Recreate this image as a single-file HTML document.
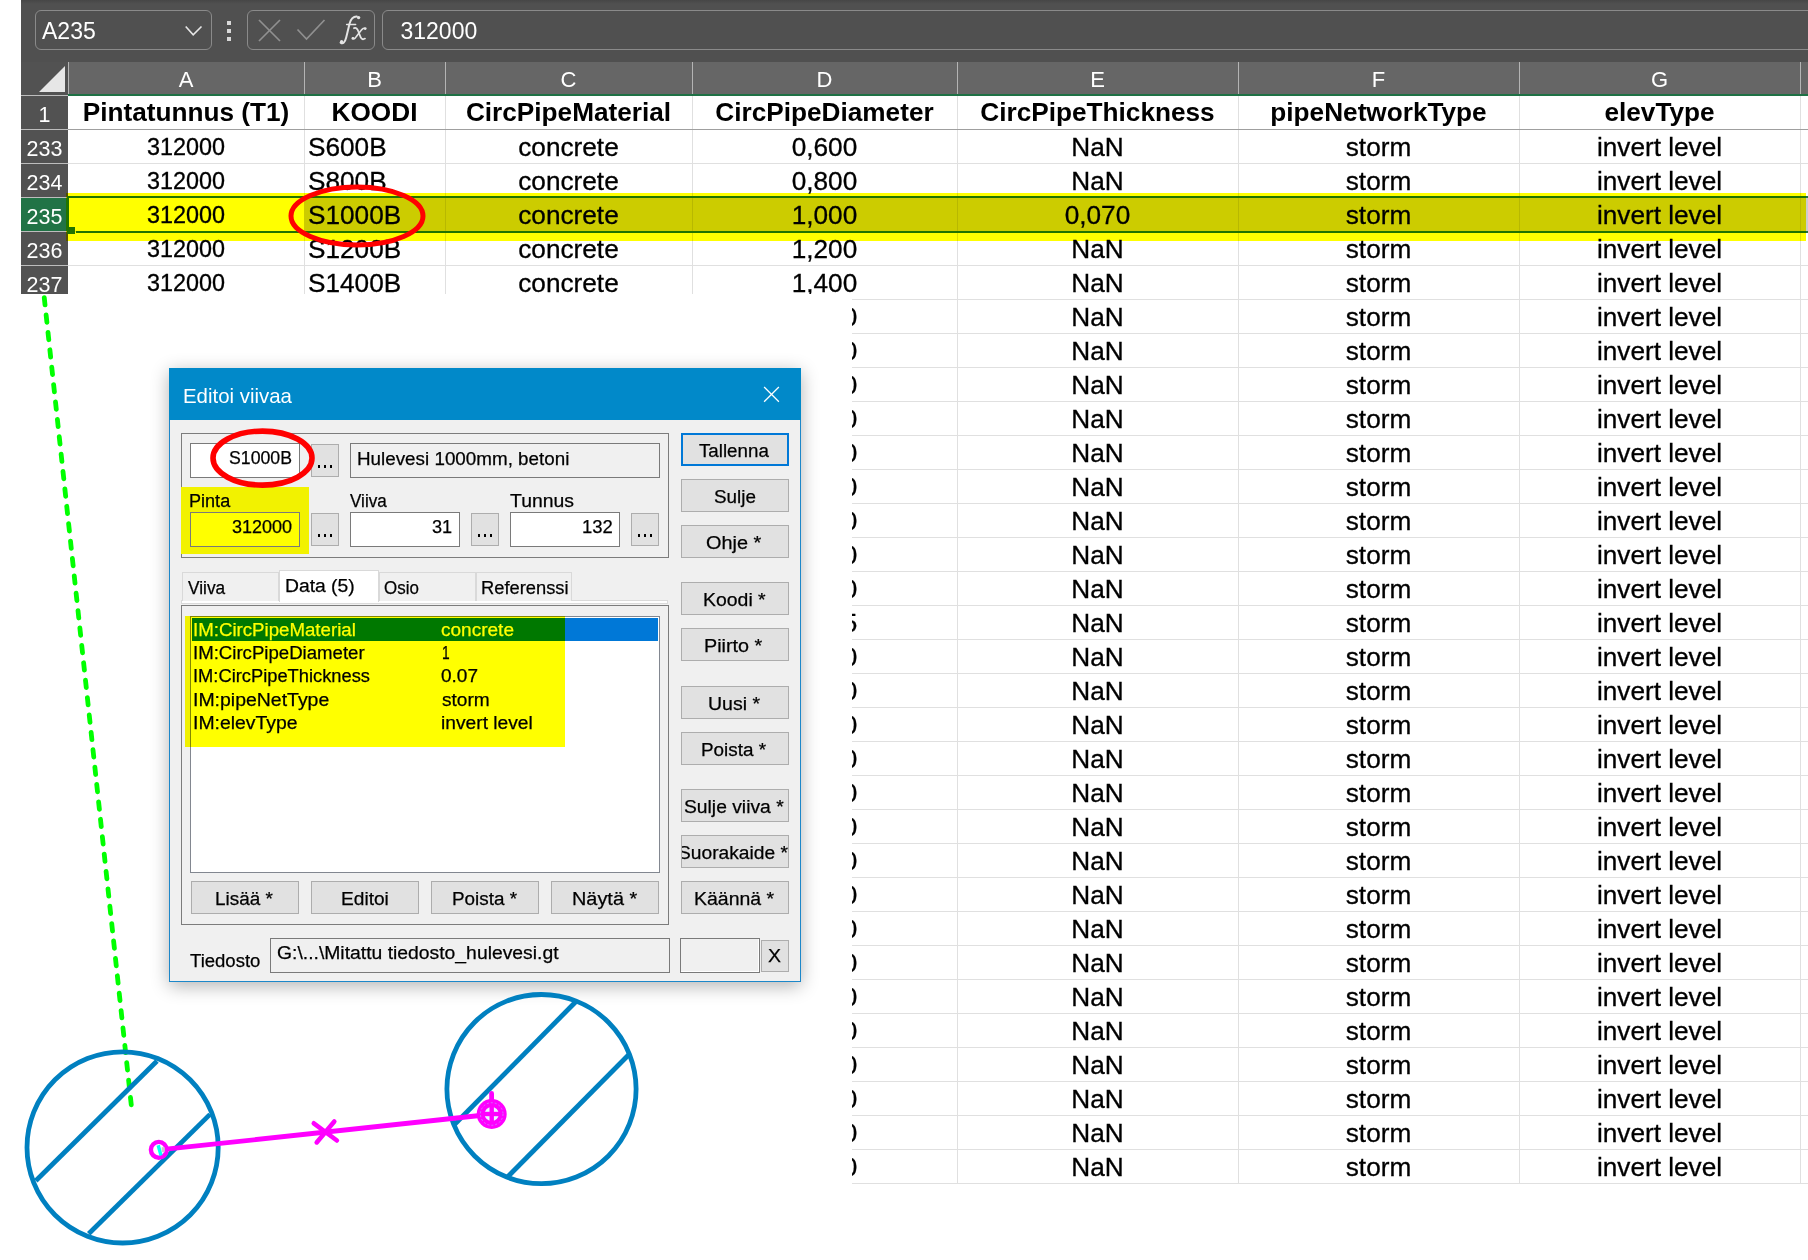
<!DOCTYPE html>
<html><head><meta charset="utf-8">
<style>
html,body{margin:0;padding:0;}
body{width:1808px;height:1260px;position:relative;overflow:hidden;background:#fff;font-family:"Liberation Sans", sans-serif;}
.a{position:absolute;}
.t{position:absolute;white-space:nowrap;line-height:1;}
.c{position:absolute;white-space:nowrap;line-height:1;text-align:center;}
.k{-webkit-text-stroke:0.3px #000;}
</style></head><body>

<div class="a" style="left:21px;top:0;width:1787px;height:62px;background:#505050"></div>
<div class="a" style="left:21px;top:0;width:1787px;height:4px;background:linear-gradient(#464646,#505050)"></div>
<div class="a" style="left:35px;top:10px;width:177px;height:40px;border:1px solid #8a8a8a;border-radius:6px;box-sizing:border-box"></div>
<div class="t" style="left:42px;top:19.5px;font-size:23px;color:#fff">A235</div>
<svg class="a" style="left:181px;top:22px" width="24" height="16"><polyline points="4.7,4.5 12.2,12.8 20.5,4.5" fill="none" stroke="#e6e6e6" stroke-width="1.6"/></svg>
<div class="a" style="left:227px;top:21px;width:4px;height:4px;background:#d8d8d8"></div>
<div class="a" style="left:227px;top:29px;width:4px;height:4px;background:#d8d8d8"></div>
<div class="a" style="left:227px;top:37px;width:4px;height:4px;background:#d8d8d8"></div>
<div class="a" style="left:247px;top:10px;width:128px;height:40px;border:1px solid #8a8a8a;border-radius:6px;box-sizing:border-box"></div>
<svg class="a" style="left:256px;top:17px" width="26" height="26"><line x1="3" y1="3" x2="24" y2="24" stroke="#909090" stroke-width="1.7"/><line x1="24" y1="3" x2="3" y2="24" stroke="#909090" stroke-width="1.7"/></svg>
<svg class="a" style="left:296px;top:17px" width="32" height="26"><polyline points="1.5,12.5 10.5,22 28.5,3" fill="none" stroke="#909090" stroke-width="1.7"/></svg>
<svg class="a" style="left:330px;top:10px" width="45" height="40" viewBox="330 10 45 40"><g fill="none" stroke="#e4e4e4" stroke-linecap="round"><path d="M340.6 42.6 Q344.2 45.2 346.2 37.5 L349.6 23.5 Q351.6 16.2 356.8 16.4" stroke-width="2"/><path d="M346.6 24.6 L355.6 24.6" stroke-width="1.5"/><path d="M354 28.2 Q357 27 358.4 31.5 L360.6 37.2 Q362 40.4 365 38.6" stroke-width="1.8"/><path d="M365.2 28.6 Q363.4 27.2 360.8 30.8 L356.4 36.4 Q354.6 39.6 353 38.2" stroke-width="1.6"/></g><g fill="#e4e4e4"><circle cx="358.6" cy="17.6" r="1.7"/><circle cx="341.6" cy="41.6" r="1.6"/><circle cx="365.2" cy="28.6" r="1.4"/><circle cx="352.9" cy="38.4" r="1.4"/></g></svg>
<div class="a" style="left:382px;top:10px;width:1500px;height:40px;border:1px solid #8a8a8a;border-radius:6px;box-sizing:border-box"></div>
<div class="t" style="left:400.5px;top:19.5px;font-size:23px;color:#fff">312000</div>
<div class="a" style="left:21px;top:62px;width:47px;height:34px;background:#525252"></div>
<div class="a" style="left:68px;top:62px;width:1740px;height:32px;background:#666666"></div>
<div class="a" style="left:68px;top:62px;width:1px;height:32px;background:#b4b4b4"></div>
<div class="a" style="left:304px;top:62px;width:1px;height:32px;background:#b4b4b4"></div>
<div class="a" style="left:445px;top:62px;width:1px;height:32px;background:#b4b4b4"></div>
<div class="a" style="left:692px;top:62px;width:1px;height:32px;background:#b4b4b4"></div>
<div class="a" style="left:957px;top:62px;width:1px;height:32px;background:#b4b4b4"></div>
<div class="a" style="left:1238px;top:62px;width:1px;height:32px;background:#b4b4b4"></div>
<div class="a" style="left:1519px;top:62px;width:1px;height:32px;background:#b4b4b4"></div>
<div class="a" style="left:1800px;top:62px;width:1px;height:32px;background:#b4b4b4"></div>
<div class="c" style="left:136.0px;width:100px;top:69px;font-size:22px;color:#fff">A</div>
<div class="c" style="left:324.5px;width:100px;top:69px;font-size:22px;color:#fff">B</div>
<div class="c" style="left:518.5px;width:100px;top:69px;font-size:22px;color:#fff">C</div>
<div class="c" style="left:774.5px;width:100px;top:69px;font-size:22px;color:#fff">D</div>
<div class="c" style="left:1047.5px;width:100px;top:69px;font-size:22px;color:#fff">E</div>
<div class="c" style="left:1328.5px;width:100px;top:69px;font-size:22px;color:#fff">F</div>
<div class="c" style="left:1609.5px;width:100px;top:69px;font-size:22px;color:#fff">G</div>
<svg class="a" style="left:39px;top:66px" width="27" height="26"><polygon points="26,0 26,26 0,26" fill="#e6e6e6"/></svg>
<div class="a" style="left:68px;top:94px;width:1740px;height:2px;background:#1e7145"></div>
<div class="a" style="left:21px;top:96px;width:47px;height:34px;background:#525252"></div>
<div class="c" style="left:21px;width:47px;top:105px;font-size:21.5px;color:#fff">1</div>
<div class="a" style="left:21px;top:130px;width:47px;height:34px;background:#525252"></div>
<div class="c" style="left:21px;width:47px;top:139px;font-size:21.5px;color:#fff">233</div>
<div class="a" style="left:21px;top:164px;width:47px;height:34px;background:#525252"></div>
<div class="c" style="left:21px;width:47px;top:173px;font-size:21.5px;color:#fff">234</div>
<div class="a" style="left:21px;top:198px;width:47px;height:34px;background:#217346"></div>
<div class="c" style="left:21px;width:47px;top:207px;font-size:21.5px;color:#fff">235</div>
<div class="a" style="left:21px;top:232px;width:47px;height:34px;background:#525252"></div>
<div class="c" style="left:21px;width:47px;top:241px;font-size:21.5px;color:#fff">236</div>
<div class="a" style="left:21px;top:266px;width:47px;height:28px;background:#525252"></div>
<div class="c" style="left:21px;width:47px;top:275px;font-size:21.5px;color:#fff">237</div>
<div class="a" style="left:21px;top:95px;width:47px;height:1px;background:#bdbdbd"></div>
<div class="a" style="left:21px;top:129px;width:47px;height:1px;background:#bdbdbd"></div>
<div class="a" style="left:21px;top:163px;width:47px;height:1px;background:#bdbdbd"></div>
<div class="a" style="left:21px;top:197px;width:47px;height:1px;background:#bdbdbd"></div>
<div class="a" style="left:21px;top:231px;width:47px;height:1px;background:#bdbdbd"></div>
<div class="a" style="left:21px;top:265px;width:47px;height:1px;background:#bdbdbd"></div>
<div class="a" style="left:304px;top:96px;width:1px;height:198px;background:#e0e0e0"></div>
<div class="a" style="left:445px;top:96px;width:1px;height:198px;background:#e0e0e0"></div>
<div class="a" style="left:692px;top:96px;width:1px;height:198px;background:#e0e0e0"></div>
<div class="a" style="left:957px;top:96px;width:1px;height:198px;background:#e0e0e0"></div>
<div class="a" style="left:1238px;top:96px;width:1px;height:198px;background:#e0e0e0"></div>
<div class="a" style="left:1519px;top:96px;width:1px;height:198px;background:#e0e0e0"></div>
<div class="a" style="left:1800px;top:96px;width:1px;height:198px;background:#e0e0e0"></div>
<div class="a" style="left:68px;top:129px;width:1740px;height:1px;background:#9f9f9f"></div>
<div class="a" style="left:68px;top:163px;width:1740px;height:1px;background:#e0e0e0"></div>
<div class="a" style="left:68px;top:197px;width:1740px;height:1px;background:#e0e0e0"></div>
<div class="a" style="left:68px;top:231px;width:1740px;height:1px;background:#e0e0e0"></div>
<div class="a" style="left:68px;top:265px;width:1740px;height:1px;background:#e0e0e0"></div>
<div class="c" style="left:36.0px;width:300px;top:98.82px;font-size:26.2px;font-weight:bold;color:#000">Pintatunnus (T1)</div>
<div class="c" style="left:224.5px;width:300px;top:98.82px;font-size:26.2px;font-weight:bold;color:#000">KOODI</div>
<div class="c" style="left:418.5px;width:300px;top:98.82px;font-size:26.2px;font-weight:bold;color:#000">CircPipeMaterial</div>
<div class="c" style="left:674.5px;width:300px;top:98.82px;font-size:26.2px;font-weight:bold;color:#000">CircPipeDiameter</div>
<div class="c" style="left:947.5px;width:300px;top:98.82px;font-size:26.2px;font-weight:bold;color:#000">CircPipeThickness</div>
<div class="c" style="left:1228.5px;width:300px;top:98.82px;font-size:26.2px;font-weight:bold;color:#000">pipeNetworkType</div>
<div class="c" style="left:1509.5px;width:300px;top:98.82px;font-size:26.2px;font-weight:bold;color:#000">elevType</div>
<div class="a" style="left:304px;top:198px;width:1504px;height:33px;background:#cccccc"></div>
<div class="a" style="left:445px;top:198px;width:1px;height:33px;background:#b8b8b8"></div>
<div class="a" style="left:692px;top:198px;width:1px;height:33px;background:#b8b8b8"></div>
<div class="a" style="left:957px;top:198px;width:1px;height:33px;background:#b8b8b8"></div>
<div class="a" style="left:1238px;top:198px;width:1px;height:33px;background:#b8b8b8"></div>
<div class="a" style="left:1519px;top:198px;width:1px;height:33px;background:#b8b8b8"></div>
<div class="a" style="left:1800px;top:198px;width:1px;height:33px;background:#b8b8b8"></div>
<div class="c k" style="left:36.0px;width:300px;top:136.19px;font-size:23.4px;font-weight:normal;color:#000">312000</div>
<div class="t k" style="left:308px;top:133.82px;font-size:26.2px;font-weight:normal;color:#000">S600B</div>
<div class="c k" style="left:418.5px;width:300px;top:133.82px;font-size:26.2px;font-weight:normal;color:#000">concrete</div>
<div class="c k" style="left:674.5px;width:300px;top:133.82px;font-size:26.2px;font-weight:normal;color:#000">0,600</div>
<div class="c k" style="left:947.5px;width:300px;top:133.82px;font-size:26.2px;font-weight:normal;color:#000">NaN</div>
<div class="c k" style="left:1228.5px;width:300px;top:133.82px;font-size:26.2px;font-weight:normal;color:#000">storm</div>
<div class="c k" style="left:1509.5px;width:300px;top:133.82px;font-size:26.2px;font-weight:normal;color:#000">invert level</div>
<div class="c k" style="left:36.0px;width:300px;top:170.19px;font-size:23.4px;font-weight:normal;color:#000">312000</div>
<div class="t k" style="left:308px;top:167.82px;font-size:26.2px;font-weight:normal;color:#000">S800B</div>
<div class="c k" style="left:418.5px;width:300px;top:167.82px;font-size:26.2px;font-weight:normal;color:#000">concrete</div>
<div class="c k" style="left:674.5px;width:300px;top:167.82px;font-size:26.2px;font-weight:normal;color:#000">0,800</div>
<div class="c k" style="left:947.5px;width:300px;top:167.82px;font-size:26.2px;font-weight:normal;color:#000">NaN</div>
<div class="c k" style="left:1228.5px;width:300px;top:167.82px;font-size:26.2px;font-weight:normal;color:#000">storm</div>
<div class="c k" style="left:1509.5px;width:300px;top:167.82px;font-size:26.2px;font-weight:normal;color:#000">invert level</div>
<div class="c k" style="left:36.0px;width:300px;top:204.19px;font-size:23.4px;font-weight:normal;color:#000">312000</div>
<div class="t k" style="left:308px;top:201.82px;font-size:26.2px;font-weight:normal;color:#000">S1000B</div>
<div class="c k" style="left:418.5px;width:300px;top:201.82px;font-size:26.2px;font-weight:normal;color:#000">concrete</div>
<div class="c k" style="left:674.5px;width:300px;top:201.82px;font-size:26.2px;font-weight:normal;color:#000">1,000</div>
<div class="c k" style="left:947.5px;width:300px;top:201.82px;font-size:26.2px;font-weight:normal;color:#000">0,070</div>
<div class="c k" style="left:1228.5px;width:300px;top:201.82px;font-size:26.2px;font-weight:normal;color:#000">storm</div>
<div class="c k" style="left:1509.5px;width:300px;top:201.82px;font-size:26.2px;font-weight:normal;color:#000">invert level</div>
<div class="c k" style="left:36.0px;width:300px;top:238.19px;font-size:23.4px;font-weight:normal;color:#000">312000</div>
<div class="t k" style="left:308px;top:235.82px;font-size:26.2px;font-weight:normal;color:#000">S1200B</div>
<div class="c k" style="left:418.5px;width:300px;top:235.82px;font-size:26.2px;font-weight:normal;color:#000">concrete</div>
<div class="c k" style="left:674.5px;width:300px;top:235.82px;font-size:26.2px;font-weight:normal;color:#000">1,200</div>
<div class="c k" style="left:947.5px;width:300px;top:235.82px;font-size:26.2px;font-weight:normal;color:#000">NaN</div>
<div class="c k" style="left:1228.5px;width:300px;top:235.82px;font-size:26.2px;font-weight:normal;color:#000">storm</div>
<div class="c k" style="left:1509.5px;width:300px;top:235.82px;font-size:26.2px;font-weight:normal;color:#000">invert level</div>
<div class="c k" style="left:36.0px;width:300px;top:272.19px;font-size:23.4px;font-weight:normal;color:#000">312000</div>
<div class="t k" style="left:308px;top:269.82px;font-size:26.2px;font-weight:normal;color:#000">S1400B</div>
<div class="c k" style="left:418.5px;width:300px;top:269.82px;font-size:26.2px;font-weight:normal;color:#000">concrete</div>
<div class="c k" style="left:674.5px;width:300px;top:269.82px;font-size:26.2px;font-weight:normal;color:#000">1,400</div>
<div class="c k" style="left:947.5px;width:300px;top:269.82px;font-size:26.2px;font-weight:normal;color:#000">NaN</div>
<div class="c k" style="left:1228.5px;width:300px;top:269.82px;font-size:26.2px;font-weight:normal;color:#000">storm</div>
<div class="c k" style="left:1509.5px;width:300px;top:269.82px;font-size:26.2px;font-weight:normal;color:#000">invert level</div>
<div class="a" style="left:67px;top:196px;width:1741px;height:2px;background:#217346"></div>
<div class="a" style="left:76px;top:231px;width:1732px;height:2px;background:#217346"></div>
<div class="a" style="left:66.5px;top:196px;width:2.5px;height:32px;background:#217346"></div>
<div class="a" style="left:66.5px;top:227px;width:8.5px;height:7px;background:#217346"></div>
<div class="a" style="left:66px;top:193px;width:1740px;height:48px;background:#ffff00;mix-blend-mode:multiply"></div>
<div class="a" style="left:0;top:294px;width:852px;height:6px;background:#fff"></div>
<div class="a" style="left:852px;top:294px;width:956px;height:890px;overflow:hidden">
<div class="a" style="left:105px;top:0;width:1px;height:889px;background:#e0e0e0"></div>
<div class="a" style="left:386px;top:0;width:1px;height:889px;background:#e0e0e0"></div>
<div class="a" style="left:667px;top:0;width:1px;height:889px;background:#e0e0e0"></div>
<div class="a" style="left:948px;top:0;width:1px;height:889px;background:#e0e0e0"></div>
<div class="a" style="left:0;top:5px;width:956px;height:1px;background:#e0e0e0"></div>
<div class="a" style="left:0;top:39px;width:956px;height:1px;background:#e0e0e0"></div>
<div class="a" style="left:0;top:73px;width:956px;height:1px;background:#e0e0e0"></div>
<div class="a" style="left:0;top:107px;width:956px;height:1px;background:#e0e0e0"></div>
<div class="a" style="left:0;top:141px;width:956px;height:1px;background:#e0e0e0"></div>
<div class="a" style="left:0;top:175px;width:956px;height:1px;background:#e0e0e0"></div>
<div class="a" style="left:0;top:209px;width:956px;height:1px;background:#e0e0e0"></div>
<div class="a" style="left:0;top:243px;width:956px;height:1px;background:#e0e0e0"></div>
<div class="a" style="left:0;top:277px;width:956px;height:1px;background:#e0e0e0"></div>
<div class="a" style="left:0;top:311px;width:956px;height:1px;background:#e0e0e0"></div>
<div class="a" style="left:0;top:345px;width:956px;height:1px;background:#e0e0e0"></div>
<div class="a" style="left:0;top:379px;width:956px;height:1px;background:#e0e0e0"></div>
<div class="a" style="left:0;top:413px;width:956px;height:1px;background:#e0e0e0"></div>
<div class="a" style="left:0;top:447px;width:956px;height:1px;background:#e0e0e0"></div>
<div class="a" style="left:0;top:481px;width:956px;height:1px;background:#e0e0e0"></div>
<div class="a" style="left:0;top:515px;width:956px;height:1px;background:#e0e0e0"></div>
<div class="a" style="left:0;top:549px;width:956px;height:1px;background:#e0e0e0"></div>
<div class="a" style="left:0;top:583px;width:956px;height:1px;background:#e0e0e0"></div>
<div class="a" style="left:0;top:617px;width:956px;height:1px;background:#e0e0e0"></div>
<div class="a" style="left:0;top:651px;width:956px;height:1px;background:#e0e0e0"></div>
<div class="a" style="left:0;top:685px;width:956px;height:1px;background:#e0e0e0"></div>
<div class="a" style="left:0;top:719px;width:956px;height:1px;background:#e0e0e0"></div>
<div class="a" style="left:0;top:753px;width:956px;height:1px;background:#e0e0e0"></div>
<div class="a" style="left:0;top:787px;width:956px;height:1px;background:#e0e0e0"></div>
<div class="a" style="left:0;top:821px;width:956px;height:1px;background:#e0e0e0"></div>
<div class="a" style="left:0;top:855px;width:956px;height:1px;background:#e0e0e0"></div>
<div class="a" style="left:0;top:889px;width:956px;height:1px;background:#e0e0e0"></div>
<div class="c k" style="left:-177.5px;width:300px;top:9.82px;font-size:26.2px">1,600</div>
<div class="c k" style="left:95.5px;width:300px;top:9.82px;font-size:26.2px">NaN</div>
<div class="c k" style="left:376.5px;width:300px;top:9.82px;font-size:26.2px">storm</div>
<div class="c k" style="left:657.5px;width:300px;top:9.82px;font-size:26.2px">invert level</div>
<div class="c k" style="left:-177.5px;width:300px;top:43.82px;font-size:26.2px">1,600</div>
<div class="c k" style="left:95.5px;width:300px;top:43.82px;font-size:26.2px">NaN</div>
<div class="c k" style="left:376.5px;width:300px;top:43.82px;font-size:26.2px">storm</div>
<div class="c k" style="left:657.5px;width:300px;top:43.82px;font-size:26.2px">invert level</div>
<div class="c k" style="left:-177.5px;width:300px;top:77.82px;font-size:26.2px">1,600</div>
<div class="c k" style="left:95.5px;width:300px;top:77.82px;font-size:26.2px">NaN</div>
<div class="c k" style="left:376.5px;width:300px;top:77.82px;font-size:26.2px">storm</div>
<div class="c k" style="left:657.5px;width:300px;top:77.82px;font-size:26.2px">invert level</div>
<div class="c k" style="left:-177.5px;width:300px;top:111.82px;font-size:26.2px">1,600</div>
<div class="c k" style="left:95.5px;width:300px;top:111.82px;font-size:26.2px">NaN</div>
<div class="c k" style="left:376.5px;width:300px;top:111.82px;font-size:26.2px">storm</div>
<div class="c k" style="left:657.5px;width:300px;top:111.82px;font-size:26.2px">invert level</div>
<div class="c k" style="left:-177.5px;width:300px;top:145.82px;font-size:26.2px">1,600</div>
<div class="c k" style="left:95.5px;width:300px;top:145.82px;font-size:26.2px">NaN</div>
<div class="c k" style="left:376.5px;width:300px;top:145.82px;font-size:26.2px">storm</div>
<div class="c k" style="left:657.5px;width:300px;top:145.82px;font-size:26.2px">invert level</div>
<div class="c k" style="left:-177.5px;width:300px;top:179.82px;font-size:26.2px">1,600</div>
<div class="c k" style="left:95.5px;width:300px;top:179.82px;font-size:26.2px">NaN</div>
<div class="c k" style="left:376.5px;width:300px;top:179.82px;font-size:26.2px">storm</div>
<div class="c k" style="left:657.5px;width:300px;top:179.82px;font-size:26.2px">invert level</div>
<div class="c k" style="left:-177.5px;width:300px;top:213.82px;font-size:26.2px">1,600</div>
<div class="c k" style="left:95.5px;width:300px;top:213.82px;font-size:26.2px">NaN</div>
<div class="c k" style="left:376.5px;width:300px;top:213.82px;font-size:26.2px">storm</div>
<div class="c k" style="left:657.5px;width:300px;top:213.82px;font-size:26.2px">invert level</div>
<div class="c k" style="left:-177.5px;width:300px;top:247.82px;font-size:26.2px">1,600</div>
<div class="c k" style="left:95.5px;width:300px;top:247.82px;font-size:26.2px">NaN</div>
<div class="c k" style="left:376.5px;width:300px;top:247.82px;font-size:26.2px">storm</div>
<div class="c k" style="left:657.5px;width:300px;top:247.82px;font-size:26.2px">invert level</div>
<div class="c k" style="left:-177.5px;width:300px;top:281.82px;font-size:26.2px">1,600</div>
<div class="c k" style="left:95.5px;width:300px;top:281.82px;font-size:26.2px">NaN</div>
<div class="c k" style="left:376.5px;width:300px;top:281.82px;font-size:26.2px">storm</div>
<div class="c k" style="left:657.5px;width:300px;top:281.82px;font-size:26.2px">invert level</div>
<div class="c k" style="left:-177.5px;width:300px;top:315.82px;font-size:26.2px">1,625</div>
<div class="c k" style="left:95.5px;width:300px;top:315.82px;font-size:26.2px">NaN</div>
<div class="c k" style="left:376.5px;width:300px;top:315.82px;font-size:26.2px">storm</div>
<div class="c k" style="left:657.5px;width:300px;top:315.82px;font-size:26.2px">invert level</div>
<div class="c k" style="left:-177.5px;width:300px;top:349.82px;font-size:26.2px">1,600</div>
<div class="c k" style="left:95.5px;width:300px;top:349.82px;font-size:26.2px">NaN</div>
<div class="c k" style="left:376.5px;width:300px;top:349.82px;font-size:26.2px">storm</div>
<div class="c k" style="left:657.5px;width:300px;top:349.82px;font-size:26.2px">invert level</div>
<div class="c k" style="left:-177.5px;width:300px;top:383.82px;font-size:26.2px">1,600</div>
<div class="c k" style="left:95.5px;width:300px;top:383.82px;font-size:26.2px">NaN</div>
<div class="c k" style="left:376.5px;width:300px;top:383.82px;font-size:26.2px">storm</div>
<div class="c k" style="left:657.5px;width:300px;top:383.82px;font-size:26.2px">invert level</div>
<div class="c k" style="left:-177.5px;width:300px;top:417.82px;font-size:26.2px">1,600</div>
<div class="c k" style="left:95.5px;width:300px;top:417.82px;font-size:26.2px">NaN</div>
<div class="c k" style="left:376.5px;width:300px;top:417.82px;font-size:26.2px">storm</div>
<div class="c k" style="left:657.5px;width:300px;top:417.82px;font-size:26.2px">invert level</div>
<div class="c k" style="left:-177.5px;width:300px;top:451.82px;font-size:26.2px">1,600</div>
<div class="c k" style="left:95.5px;width:300px;top:451.82px;font-size:26.2px">NaN</div>
<div class="c k" style="left:376.5px;width:300px;top:451.82px;font-size:26.2px">storm</div>
<div class="c k" style="left:657.5px;width:300px;top:451.82px;font-size:26.2px">invert level</div>
<div class="c k" style="left:-177.5px;width:300px;top:485.82px;font-size:26.2px">1,600</div>
<div class="c k" style="left:95.5px;width:300px;top:485.82px;font-size:26.2px">NaN</div>
<div class="c k" style="left:376.5px;width:300px;top:485.82px;font-size:26.2px">storm</div>
<div class="c k" style="left:657.5px;width:300px;top:485.82px;font-size:26.2px">invert level</div>
<div class="c k" style="left:-177.5px;width:300px;top:519.82px;font-size:26.2px">1,600</div>
<div class="c k" style="left:95.5px;width:300px;top:519.82px;font-size:26.2px">NaN</div>
<div class="c k" style="left:376.5px;width:300px;top:519.82px;font-size:26.2px">storm</div>
<div class="c k" style="left:657.5px;width:300px;top:519.82px;font-size:26.2px">invert level</div>
<div class="c k" style="left:-177.5px;width:300px;top:553.82px;font-size:26.2px">1,600</div>
<div class="c k" style="left:95.5px;width:300px;top:553.82px;font-size:26.2px">NaN</div>
<div class="c k" style="left:376.5px;width:300px;top:553.82px;font-size:26.2px">storm</div>
<div class="c k" style="left:657.5px;width:300px;top:553.82px;font-size:26.2px">invert level</div>
<div class="c k" style="left:-177.5px;width:300px;top:587.82px;font-size:26.2px">1,600</div>
<div class="c k" style="left:95.5px;width:300px;top:587.82px;font-size:26.2px">NaN</div>
<div class="c k" style="left:376.5px;width:300px;top:587.82px;font-size:26.2px">storm</div>
<div class="c k" style="left:657.5px;width:300px;top:587.82px;font-size:26.2px">invert level</div>
<div class="c k" style="left:-177.5px;width:300px;top:621.82px;font-size:26.2px">1,600</div>
<div class="c k" style="left:95.5px;width:300px;top:621.82px;font-size:26.2px">NaN</div>
<div class="c k" style="left:376.5px;width:300px;top:621.82px;font-size:26.2px">storm</div>
<div class="c k" style="left:657.5px;width:300px;top:621.82px;font-size:26.2px">invert level</div>
<div class="c k" style="left:-177.5px;width:300px;top:655.82px;font-size:26.2px">1,600</div>
<div class="c k" style="left:95.5px;width:300px;top:655.82px;font-size:26.2px">NaN</div>
<div class="c k" style="left:376.5px;width:300px;top:655.82px;font-size:26.2px">storm</div>
<div class="c k" style="left:657.5px;width:300px;top:655.82px;font-size:26.2px">invert level</div>
<div class="c k" style="left:-177.5px;width:300px;top:689.82px;font-size:26.2px">1,600</div>
<div class="c k" style="left:95.5px;width:300px;top:689.82px;font-size:26.2px">NaN</div>
<div class="c k" style="left:376.5px;width:300px;top:689.82px;font-size:26.2px">storm</div>
<div class="c k" style="left:657.5px;width:300px;top:689.82px;font-size:26.2px">invert level</div>
<div class="c k" style="left:-177.5px;width:300px;top:723.82px;font-size:26.2px">1,600</div>
<div class="c k" style="left:95.5px;width:300px;top:723.82px;font-size:26.2px">NaN</div>
<div class="c k" style="left:376.5px;width:300px;top:723.82px;font-size:26.2px">storm</div>
<div class="c k" style="left:657.5px;width:300px;top:723.82px;font-size:26.2px">invert level</div>
<div class="c k" style="left:-177.5px;width:300px;top:757.82px;font-size:26.2px">1,600</div>
<div class="c k" style="left:95.5px;width:300px;top:757.82px;font-size:26.2px">NaN</div>
<div class="c k" style="left:376.5px;width:300px;top:757.82px;font-size:26.2px">storm</div>
<div class="c k" style="left:657.5px;width:300px;top:757.82px;font-size:26.2px">invert level</div>
<div class="c k" style="left:-177.5px;width:300px;top:791.82px;font-size:26.2px">1,600</div>
<div class="c k" style="left:95.5px;width:300px;top:791.82px;font-size:26.2px">NaN</div>
<div class="c k" style="left:376.5px;width:300px;top:791.82px;font-size:26.2px">storm</div>
<div class="c k" style="left:657.5px;width:300px;top:791.82px;font-size:26.2px">invert level</div>
<div class="c k" style="left:-177.5px;width:300px;top:825.82px;font-size:26.2px">1,600</div>
<div class="c k" style="left:95.5px;width:300px;top:825.82px;font-size:26.2px">NaN</div>
<div class="c k" style="left:376.5px;width:300px;top:825.82px;font-size:26.2px">storm</div>
<div class="c k" style="left:657.5px;width:300px;top:825.82px;font-size:26.2px">invert level</div>
<div class="c k" style="left:-177.5px;width:300px;top:859.82px;font-size:26.2px">1,600</div>
<div class="c k" style="left:95.5px;width:300px;top:859.82px;font-size:26.2px">NaN</div>
<div class="c k" style="left:376.5px;width:300px;top:859.82px;font-size:26.2px">storm</div>
<div class="c k" style="left:657.5px;width:300px;top:859.82px;font-size:26.2px">invert level</div>
</div>
<div class="a" style="left:169px;top:368px;width:632px;height:614px;background:#f0f0f0;border:1px solid #1c87c9;box-sizing:border-box;box-shadow:0 4px 17px rgba(0,0,0,0.30)"></div>
<div class="a" style="left:169px;top:368px;width:632px;height:52px;background:#0189c9"></div>
<div class="t" style="left:182.56px;top:385.82px;font-size:20.3px;color:#fff;transform:scaleX(1.0068);transform-origin:0 0;-webkit-text-stroke:0.25px #fff;-webkit-text-stroke:0">Editoi viivaa</div>
<svg class="a" style="left:763px;top:386px" width="18" height="18"><line x1="1.1" y1="1" x2="15.9" y2="15.8" stroke="#fff" stroke-width="1.25"/><line x1="15.9" y1="1" x2="1.1" y2="15.8" stroke="#fff" stroke-width="1.25"/></svg>
<div class="a" style="left:181px;top:433px;width:488px;height:125px;background:transparent;border:1px solid #7c7c7c;box-sizing:border-box;"></div>
<div class="a" style="left:190px;top:443px;width:110px;height:35px;background:#fff;border:1px solid #7a7a7a;box-sizing:border-box;"></div>
<div class="t" style="left:229.30px;top:449.39px;font-size:18.8px;color:#000;transform:scaleX(0.9424);transform-origin:0 0;-webkit-text-stroke:0.25px #000;">S1000B</div>
<div class="a" style="left:311px;top:444px;width:28px;height:33px;background:#e1e1e1;border:1px solid #adadad;box-sizing:border-box;"></div>
<div class="a" style="left:317.6px;top:465.2px;width:2.6px;height:2.5px;background:#000"></div><div class="a" style="left:323.7px;top:465.2px;width:2.6px;height:2.5px;background:#000"></div><div class="a" style="left:329.8px;top:465.2px;width:2.6px;height:2.5px;background:#000"></div>
<div class="a" style="left:350px;top:443px;width:310px;height:35px;background:#f0f0f0;border:1px solid #7a7a7a;box-sizing:border-box;"></div>
<div class="t" style="left:356.99px;top:449.89px;font-size:18.8px;color:#000;transform:scaleX(1.0022);transform-origin:0 0;-webkit-text-stroke:0.25px #000;">Hulevesi 1000mm, betoni</div>
<div class="a" style="left:180.5px;top:487px;width:128.5px;height:67px;background:#f2f200"></div>
<div class="t" style="left:188.85px;top:492.39px;font-size:18.8px;color:#000;transform:scaleX(0.9623);transform-origin:0 0;-webkit-text-stroke:0.25px #000;">Pinta</div>
<div class="a" style="left:190px;top:512px;width:110px;height:35px;background:#ffff00;border:1px solid #7a7a7a;box-sizing:border-box;"></div>
<div class="t" style="left:231.88px;top:518.39px;font-size:18.8px;color:#000;transform:scaleX(0.9594);transform-origin:0 0;-webkit-text-stroke:0.25px #000;">312000</div>
<div class="a" style="left:311px;top:513px;width:28px;height:33px;background:#e1e1e1;border:1px solid #adadad;box-sizing:border-box;"></div>
<div class="a" style="left:317.6px;top:534.2px;width:2.6px;height:2.5px;background:#000"></div><div class="a" style="left:323.7px;top:534.2px;width:2.6px;height:2.5px;background:#000"></div><div class="a" style="left:329.8px;top:534.2px;width:2.6px;height:2.5px;background:#000"></div>
<div class="t" style="left:350.21px;top:492.39px;font-size:18.8px;color:#000;transform:scaleX(0.9101);transform-origin:0 0;-webkit-text-stroke:0.25px #000;">Viiva</div>
<div class="a" style="left:350px;top:512px;width:110px;height:35px;background:#fff;border:1px solid #7a7a7a;box-sizing:border-box;"></div>
<div class="t" style="left:431.57px;top:518.39px;font-size:18.8px;color:#000;transform:scaleX(0.9652);transform-origin:0 0;-webkit-text-stroke:0.25px #000;">31</div>
<div class="a" style="left:471px;top:513px;width:28px;height:33px;background:#e1e1e1;border:1px solid #adadad;box-sizing:border-box;"></div>
<div class="a" style="left:477.6px;top:534.2px;width:2.6px;height:2.5px;background:#000"></div><div class="a" style="left:483.7px;top:534.2px;width:2.6px;height:2.5px;background:#000"></div><div class="a" style="left:489.8px;top:534.2px;width:2.6px;height:2.5px;background:#000"></div>
<div class="t" style="left:509.71px;top:492.39px;font-size:18.8px;color:#000;transform:scaleX(1.0327);transform-origin:0 0;-webkit-text-stroke:0.25px #000;">Tunnus</div>
<div class="a" style="left:510px;top:512px;width:110px;height:35px;background:#fff;border:1px solid #7a7a7a;box-sizing:border-box;"></div>
<div class="t" style="left:581.81px;top:518.39px;font-size:18.8px;color:#000;transform:scaleX(0.9844);transform-origin:0 0;-webkit-text-stroke:0.25px #000;">132</div>
<div class="a" style="left:631px;top:513px;width:28px;height:33px;background:#e1e1e1;border:1px solid #adadad;box-sizing:border-box;"></div>
<div class="a" style="left:637.6px;top:534.2px;width:2.6px;height:2.5px;background:#000"></div><div class="a" style="left:643.7px;top:534.2px;width:2.6px;height:2.5px;background:#000"></div><div class="a" style="left:649.8px;top:534.2px;width:2.6px;height:2.5px;background:#000"></div>
<div class="a" style="left:681px;top:433px;width:108px;height:33px;background:#e1e1e1;border:2px solid #0078d7;box-sizing:border-box;"></div>
<div class="t" style="left:699.02px;top:441.89px;font-size:18.8px;color:#000;transform:scaleX(0.9978);transform-origin:0 0;-webkit-text-stroke:0.25px #000;">Tallenna</div>
<div class="a" style="left:681px;top:479px;width:108px;height:33px;background:#e1e1e1;border:1px solid #adadad;box-sizing:border-box;"></div>
<div class="t" style="left:713.55px;top:487.89px;font-size:18.8px;color:#000;transform:scaleX(1.0040);transform-origin:0 0;-webkit-text-stroke:0.25px #000;">Sulje</div>
<div class="a" style="left:681px;top:525px;width:108px;height:33px;background:#e1e1e1;border:1px solid #adadad;box-sizing:border-box;"></div>
<div class="t" style="left:706.30px;top:533.89px;font-size:18.8px;color:#000;transform:scaleX(1.0580);transform-origin:0 0;-webkit-text-stroke:0.25px #000;">Ohje *</div>
<div class="a" style="left:681px;top:582px;width:108px;height:33px;background:#e1e1e1;border:1px solid #adadad;box-sizing:border-box;"></div>
<div class="t" style="left:702.94px;top:590.89px;font-size:18.8px;color:#000;transform:scaleX(1.0349);transform-origin:0 0;-webkit-text-stroke:0.25px #000;">Koodi *</div>
<div class="a" style="left:681px;top:628px;width:108px;height:33px;background:#e1e1e1;border:1px solid #adadad;box-sizing:border-box;"></div>
<div class="t" style="left:704.42px;top:636.89px;font-size:18.8px;color:#000;transform:scaleX(1.0526);transform-origin:0 0;-webkit-text-stroke:0.25px #000;">Piirto *</div>
<div class="a" style="left:681px;top:686px;width:108px;height:33px;background:#e1e1e1;border:1px solid #adadad;box-sizing:border-box;"></div>
<div class="t" style="left:707.53px;top:694.89px;font-size:18.8px;color:#000;transform:scaleX(1.0391);transform-origin:0 0;-webkit-text-stroke:0.25px #000;">Uusi *</div>
<div class="a" style="left:681px;top:732px;width:108px;height:33px;background:#e1e1e1;border:1px solid #adadad;box-sizing:border-box;"></div>
<div class="t" style="left:701.49px;top:740.89px;font-size:18.8px;color:#000;transform:scaleX(1.0051);transform-origin:0 0;-webkit-text-stroke:0.25px #000;">Poista *</div>
<div class="a" style="left:681px;top:789px;width:108px;height:33px;background:#e1e1e1;border:1px solid #adadad;box-sizing:border-box;"></div>
<div class="t" style="left:684.03px;top:797.89px;font-size:18.8px;color:#000;transform:scaleX(1.0264);transform-origin:0 0;-webkit-text-stroke:0.25px #000;">Sulje viiva *</div>
<div class="a" style="left:681px;top:835px;width:108px;height:33px;background:#e1e1e1;border:1px solid #adadad;box-sizing:border-box;"></div>
<div class="a" style="left:682px;top:836px;width:106px;height:31px;overflow:hidden">
<div class="t" style="left:-4.37px;top:7.89px;font-size:18.8px;color:#000;transform:scaleX(1.0225);transform-origin:0 0;-webkit-text-stroke:0.25px #000;">Suorakaide *</div>
</div>
<div class="a" style="left:681px;top:881px;width:108px;height:33px;background:#e1e1e1;border:1px solid #adadad;box-sizing:border-box;"></div>
<div class="t" style="left:693.54px;top:889.89px;font-size:18.8px;color:#000;transform:scaleX(1.0374);transform-origin:0 0;-webkit-text-stroke:0.25px #000;">Käännä *</div>
<div class="a" style="left:181px;top:600px;width:487px;height:4px;background:#fff;border:1px solid #dadada;box-sizing:border-box"></div>
<div class="a" style="left:182px;top:572px;width:97px;height:29px;background:#f0f0f0;border:1px solid #d9d9d9;border-bottom:none;box-sizing:border-box"></div>
<div class="t" style="left:187.81px;top:578.69px;font-size:18.8px;color:#000;transform:scaleX(0.9200);transform-origin:0 0;-webkit-text-stroke:0.25px #000;">Viiva</div>
<div class="a" style="left:379px;top:572px;width:97px;height:29px;background:#f0f0f0;border:1px solid #d9d9d9;border-bottom:none;box-sizing:border-box"></div>
<div class="t" style="left:383.74px;top:578.69px;font-size:18.8px;color:#000;transform:scaleX(0.9018);transform-origin:0 0;-webkit-text-stroke:0.25px #000;">Osio</div>
<div class="a" style="left:476px;top:572px;width:96px;height:29px;background:#f0f0f0;border:1px solid #d9d9d9;border-bottom:none;box-sizing:border-box"></div>
<div class="t" style="left:481.23px;top:578.69px;font-size:18.8px;color:#000;transform:scaleX(0.9755);transform-origin:0 0;-webkit-text-stroke:0.25px #000;">Referenssi</div>
<div class="a" style="left:279px;top:570px;width:100px;height:32px;background:#fff;border:1px solid #d9d9d9;border-bottom:none;box-sizing:border-box"></div>
<div class="t" style="left:285.36px;top:576.69px;font-size:18.8px;color:#000;transform:scaleX(1.0270);transform-origin:0 0;-webkit-text-stroke:0.25px #000;">Data (5)</div>
<div class="a" style="left:181px;top:605px;width:488px;height:320px;background:transparent;border:1px solid #7c7c7c;box-sizing:border-box;"></div>
<div class="a" style="left:190px;top:616px;width:470px;height:257px;background:#fff;border:1px solid #828790;box-sizing:border-box;"></div>
<div class="a" style="left:192px;top:618px;width:466px;height:23px;background:#0078d7"></div>
<div class="t" style="left:193.12px;top:621.39px;font-size:18.8px;color:#fff;transform:scaleX(0.9937);transform-origin:0 0;-webkit-text-stroke:0.25px #fff;">IM:CircPipeMaterial</div>
<div class="t" style="left:441.44px;top:621.39px;font-size:18.8px;color:#fff;transform:scaleX(1.0128);transform-origin:0 0;-webkit-text-stroke:0.25px #fff;">concrete</div>
<div class="t" style="left:193.12px;top:644.44px;font-size:18.8px;color:#000;transform:scaleX(0.9909);transform-origin:0 0;-webkit-text-stroke:0.25px #000;">IM:CircPipeDiameter</div>
<div class="t" style="left:442.47px;top:644.44px;font-size:18.8px;color:#000;transform:scaleX(0.7337);transform-origin:0 0;-webkit-text-stroke:0.25px #000;">1</div>
<div class="t" style="left:193.15px;top:667.49px;font-size:18.8px;color:#000;transform:scaleX(0.9747);transform-origin:0 0;-webkit-text-stroke:0.25px #000;">IM:CircPipeThickness</div>
<div class="t" style="left:441.44px;top:667.49px;font-size:18.8px;color:#000;transform:scaleX(1.0122);transform-origin:0 0;-webkit-text-stroke:0.25px #000;">0.07</div>
<div class="t" style="left:193.05px;top:690.54px;font-size:18.8px;color:#000;transform:scaleX(1.0359);transform-origin:0 0;-webkit-text-stroke:0.25px #000;">IM:pipeNetType</div>
<div class="t" style="left:441.63px;top:690.54px;font-size:18.8px;color:#000;transform:scaleX(1.0174);transform-origin:0 0;-webkit-text-stroke:0.25px #000;">storm</div>
<div class="t" style="left:193.05px;top:713.59px;font-size:18.8px;color:#000;transform:scaleX(1.0335);transform-origin:0 0;-webkit-text-stroke:0.25px #000;">IM:elevType</div>
<div class="t" style="left:440.95px;top:713.59px;font-size:18.8px;color:#000;transform:scaleX(1.0226);transform-origin:0 0;-webkit-text-stroke:0.25px #000;">invert level</div>
<div class="a" style="left:185px;top:616px;width:380px;height:131px;background:#ffff00;mix-blend-mode:multiply"></div>
<div class="a" style="left:191px;top:881px;width:108px;height:33px;background:#e1e1e1;border:1px solid #adadad;box-sizing:border-box;"></div>
<div class="t" style="left:214.68px;top:890.19px;font-size:18.8px;color:#000;transform:scaleX(1.0082);transform-origin:0 0;-webkit-text-stroke:0.25px #000;">Lisää *</div>
<div class="a" style="left:311px;top:881px;width:108px;height:33px;background:#e1e1e1;border:1px solid #adadad;box-sizing:border-box;"></div>
<div class="t" style="left:340.97px;top:890.19px;font-size:18.8px;color:#000;transform:scaleX(1.0187);transform-origin:0 0;-webkit-text-stroke:0.25px #000;">Editoi</div>
<div class="a" style="left:431px;top:881px;width:108px;height:33px;background:#e1e1e1;border:1px solid #adadad;box-sizing:border-box;"></div>
<div class="t" style="left:451.69px;top:890.19px;font-size:18.8px;color:#000;transform:scaleX(1.0051);transform-origin:0 0;-webkit-text-stroke:0.25px #000;">Poista *</div>
<div class="a" style="left:551px;top:881px;width:108px;height:33px;background:#e1e1e1;border:1px solid #adadad;box-sizing:border-box;"></div>
<div class="t" style="left:571.61px;top:890.19px;font-size:18.8px;color:#000;transform:scaleX(1.0588);transform-origin:0 0;-webkit-text-stroke:0.25px #000;">Näytä *</div>
<div class="t" style="left:189.73px;top:952.09px;font-size:18.8px;color:#000;transform:scaleX(0.9869);transform-origin:0 0;-webkit-text-stroke:0.25px #000;">Tiedosto</div>
<div class="a" style="left:270px;top:938px;width:400px;height:35px;background:#f0f0f0;border:1px solid #7a7a7a;box-sizing:border-box;"></div>
<div class="t" style="left:277.13px;top:944.49px;font-size:18.8px;color:#000;transform:scaleX(1.0294);transform-origin:0 0;-webkit-text-stroke:0.25px #000;">G:\...\Mitattu tiedosto_hulevesi.gt</div>
<div class="a" style="left:680px;top:938px;width:80px;height:35px;background:#f0f0f0;border:1px solid #7a7a7a;box-sizing:border-box;box-shadow:inset -1px -1px 0 #fff"></div>
<div class="a" style="left:761px;top:940px;width:28px;height:32px;background:#e1e1e1;border:1px solid #adadad;box-sizing:border-box;"></div>
<div class="t" style="left:767.91px;top:947.29px;font-size:18.8px;color:#000;transform:scaleX(1.0381);transform-origin:0 0;-webkit-text-stroke:0.25px #000;">X</div>
<svg class="a" style="left:200px;top:420px" width="130" height="80"><ellipse cx="62.5" cy="38.1" rx="49.5" ry="27.0" fill="none" stroke="#ff0000" stroke-width="5.6"/></svg>
<svg class="a" style="left:280px;top:180px" width="160" height="80"><ellipse cx="77" cy="36" rx="66" ry="29" fill="none" stroke="#ff0000" stroke-width="5"/></svg>
<svg class="a" style="left:0;top:0" width="1808" height="1260" viewBox="0 0 1808 1260">
<line x1="44.25" y1="297.6" x2="131.3" y2="1105.2" stroke="#00ff00" stroke-width="4.8" stroke-dasharray="7.4 10.09" stroke-linecap="round"/>
<g stroke="#0080c0" stroke-width="4.8" fill="none">
<circle cx="122.6" cy="1147.4" r="95.6"/>
<circle cx="541.5" cy="1089.1" r="94.6"/>
<line x1="35.8" y1="1180.8" x2="157" y2="1061"/>
<line x1="88.7" y1="1233.7" x2="210" y2="1114.4"/>
<line x1="454.5" y1="1124.5" x2="576" y2="1001.5"/>
<line x1="507.5" y1="1177" x2="628.7" y2="1054.8"/>
</g>
<line x1="166" y1="1149.2" x2="480" y2="1115.5" stroke="#ff00ff" stroke-width="4.8"/>
<circle cx="158.8" cy="1149.8" r="7.9" fill="#fff" stroke="#ff00ff" stroke-width="4.4"/>
<line x1="158.2" y1="1145.2" x2="161" y2="1155.5" stroke="#00ffff" stroke-width="3.4"/>
<rect x="161.7" y="1147.2" width="3" height="5" fill="#c8c8c8"/>
<line x1="313.8" y1="1123.3" x2="336.9" y2="1140.5" stroke="#ff00ff" stroke-width="4.6" stroke-linecap="round"/>
<line x1="334.3" y1="1121.5" x2="316.7" y2="1142.4" stroke="#ff00ff" stroke-width="4.6" stroke-linecap="round"/>
<line x1="491.6" y1="1093.5" x2="491.6" y2="1104" stroke="#ff00ff" stroke-width="4.8" stroke-linecap="round"/>
<circle cx="491.7" cy="1114" r="15" fill="#ff00ff"/>
<circle cx="491.7" cy="1114" r="11.3" fill="none" stroke="#c890ff" stroke-width="0.8" stroke-dasharray="2 2"/>
<circle cx="491.7" cy="1114" r="8" fill="#e8f8ff"/>
<line x1="483" y1="1114" x2="500.4" y2="1114" stroke="#ff00ff" stroke-width="4.4"/>
<line x1="491.7" y1="1105.3" x2="491.7" y2="1122.7" stroke="#ff00ff" stroke-width="4.4"/>
<circle cx="491.7" cy="1114" r="8.6" fill="none" stroke="#ff00ff" stroke-width="3"/>
</svg>
